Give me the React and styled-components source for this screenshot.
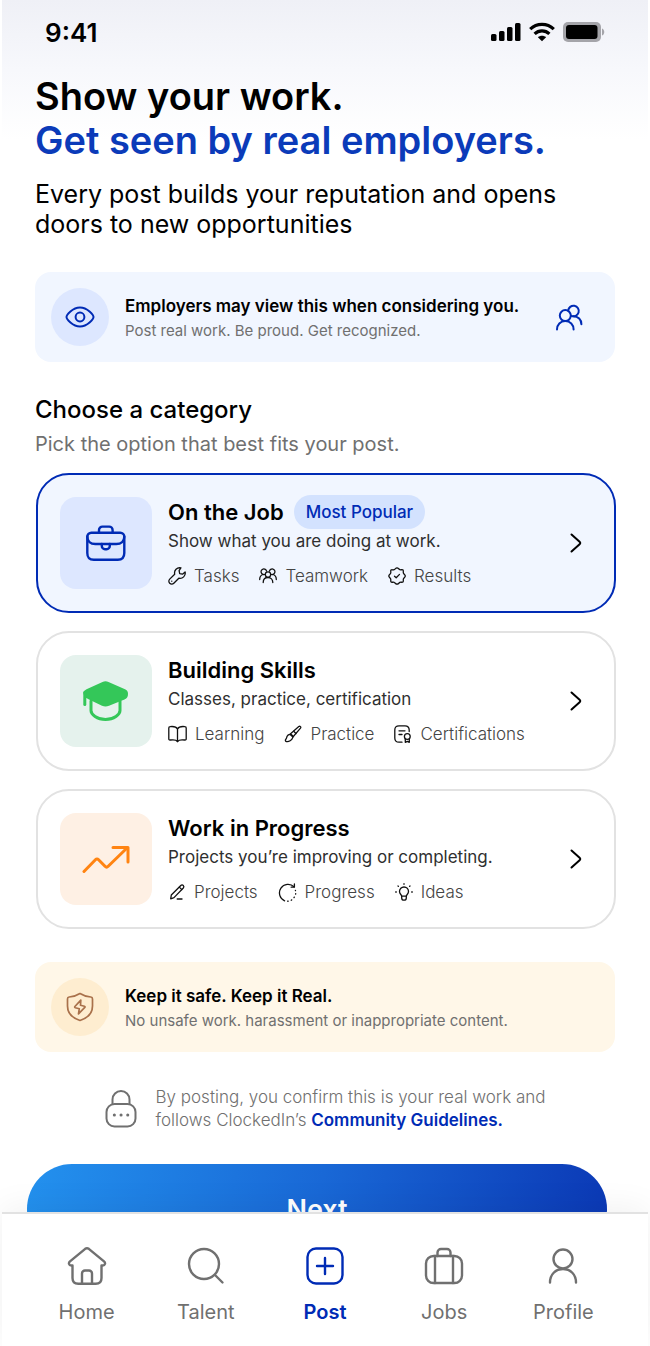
import React from 'react';
import styled, { createGlobalStyle, ThemeProvider } from 'styled-components';

const theme = {
  font: 'Inter, "Liberation Sans", sans-serif',
  colours: {
    blue: '#002bb5',
    headline: '#0b3bb9',
    text: '#000000',
    body: '#2f2f2f',
    tag: '#444444',
    muted: '#707070',
    paleBlue: '#f1f6ff',
    tileBlue: '#dde7ff',
    line: '#e2e2e2',
  },
};

const GlobalStyle = createGlobalStyle`
  * {
    box-sizing: border-box;
  }
  body {
    margin: 0;
    background: #ffffff;
  }
  h1, h2, p {
    margin: 0;
  }
  svg {
    display: block;
    flex: none;
  }
`;

const Shell = styled.div`
  display: flex;
  flex-direction: column;
  height: 100vh;
  padding: 0 2px;
  font-family: ${({ theme }) => theme.font};
  color: ${({ theme }) => theme.colours.text};
`;

const Scroll = styled.div`
  flex: 1;
  min-height: 0;
  overflow-y: auto;
  scrollbar-width: none;
  background: linear-gradient(#eff0f6, #f7f8fc 70px, #ffffff 140px);
`;

const StatusBar = styled.header`
  display: flex;
  align-items: center;
  justify-content: space-between;
  height: 64px;
  padding: 0 43px;
`;

const Time = styled.span`
  font-size: 26px;
  font-weight: 600;
`;

const StatusIcons = styled.div`
  display: flex;
  align-items: center;
  gap: 8px;
`;

const Content = styled.main`
  padding: 10px 33px 32px;
`;

const Headline = styled.h1`
  font-size: 38px;
  line-height: 44px;
  font-weight: 600;
`;

const HeadlineAccent = styled.span`
  display: block;
  color: ${({ theme }) => theme.colours.headline};
`;

const Lead = styled.p`
  margin-top: 17px;
  font-size: 25px;
  line-height: 30px;
`;

const Banner = styled.section`
  display: flex;
  align-items: center;
  gap: 16px;
  margin-top: 33px;
  padding: 16px 32px 16px 16px;
  border-radius: 16px;
  background: ${({ $warm, theme }) => ($warm ? '#fff7e8' : theme.colours.paleBlue)};
`;

const BannerIcon = styled.div`
  display: flex;
  flex: none;
  align-items: center;
  justify-content: center;
  width: 58px;
  height: 58px;
  border-radius: 50%;
  color: ${({ $warm, theme }) => ($warm ? '#a9714b' : theme.colours.blue)};
  background: ${({ $warm, theme }) => ($warm ? '#feedd0' : theme.colours.tileBlue)};
`;

const BannerText = styled.div`
  flex: 1;
  white-space: nowrap;
`;

const BannerTitle = styled.h2`
  font-size: 17px;
  line-height: 28px;
  font-weight: 600;
`;

const BannerNote = styled.p`
  font-size: 15px;
  line-height: 22px;
  color: ${({ theme }) => theme.colours.muted};
`;

const BannerExtra = styled.div`
  color: ${({ theme }) => theme.colours.blue};
`;

const SectionTitle = styled.h2`
  margin-top: 32px;
  font-size: 24px;
  line-height: 32px;
  font-weight: 500;
`;

const SectionNote = styled.p`
  margin-top: 4px;
  font-size: 20px;
  line-height: 28px;
  color: ${({ theme }) => theme.colours.muted};
`;

const Cards = styled.div`
  display: flex;
  flex-direction: column;
  gap: 18px;
  margin: 15px -1px 0 1px;
`;

const Card = styled.button`
  display: flex;
  align-items: center;
  gap: 16px;
  width: 100%;
  padding: 20px 32px 20px 22px;
  border: 2px solid ${({ $selected, theme }) => ($selected ? theme.colours.blue : theme.colours.line)};
  border-radius: 33px;
  background: ${({ $selected, theme }) => ($selected ? theme.colours.paleBlue : '#ffffff')};
  color: inherit;
  font-family: inherit;
  text-align: left;
  cursor: pointer;
`;

const Tile = styled.span`
  display: flex;
  flex: none;
  align-items: center;
  justify-content: center;
  width: 92px;
  height: 92px;
  border-radius: 16px;
  color: ${({ $color }) => $color};
  background: ${({ $bg }) => $bg};
`;

const CardBody = styled.span`
  flex: 1;
  padding-bottom: 3px;
  white-space: nowrap;
`;

const CardTitle = styled.span`
  display: flex;
  align-items: center;
  gap: 10px;
  height: 34px;
  font-size: 22px;
  font-weight: 600;
`;

const Pill = styled.span`
  padding: 0 12px;
  border-radius: 17px;
  font-size: 17px;
  line-height: 34px;
  font-weight: 500;
  color: ${({ theme }) => theme.colours.blue};
  background: #d3e2fe;
`;

const CardText = styled.span`
  display: block;
  font-size: 17px;
  line-height: 24px;
  color: ${({ theme }) => theme.colours.body};
`;

const Tags = styled.span`
  display: flex;
  gap: 20px;
  margin-top: 11px;
`;

const Tag = styled.span`
  display: flex;
  align-items: center;
  gap: 8px;
  font-size: 17px;
  line-height: 24px;
  font-weight: 300;
  color: ${({ theme }) => theme.colours.tag};

  svg {
    color: #111111;
  }
`;

const Confirm = styled.div`
  display: flex;
  align-items: center;
  justify-content: center;
  gap: 19px;
  margin-top: 34px;
  color: ${({ theme }) => theme.colours.muted};
`;

const ConfirmText = styled.p`
  font-size: 17px;
  line-height: 23px;
  font-weight: 300;
`;

const TextLink = styled.a`
  font-weight: 600;
  color: ${({ theme }) => theme.colours.blue};
  text-decoration: none;
`;

const NextButton = styled.button`
  display: block;
  width: 100%;
  height: 90px;
  margin: 32px 0 0 -8px;
  border: 0;
  border-radius: 45px;
  background: linear-gradient(100deg, #2391ee, #1968d6 50%, #0b38b5);
  color: #ffffff;
  font-family: inherit;
  font-size: 27px;
  font-weight: 600;
  cursor: pointer;
`;

const TabBar = styled.nav`
  display: flex;
  flex: none;
  z-index: 1;
  height: 134px;
  padding: 32px 25px 0;
  border-top: 2px solid ${({ theme }) => theme.colours.line};
  background: #ffffff;
  box-shadow: 0 -4px 32px rgba(0, 0, 0, 0.06);
`;

const Tab = styled.a`
  display: flex;
  flex: 1;
  flex-direction: column;
  align-items: center;
  gap: 12px;
  font-size: 20px;
  line-height: 28px;
  font-weight: ${({ $active }) => ($active ? 600 : 400)};
  color: ${({ $active, theme }) => ($active ? theme.colours.blue : theme.colours.muted)};
  text-decoration: none;
`;

// Every icon is drawn on a grid of its own size, so one unit is one pixel
const Icon = ({ w, h, stroke = 2, children }) => (
  <svg
    width={w}
    height={h}
    viewBox={`0 0 ${w} ${h}`}
    fill="none"
    stroke="currentColor"
    strokeWidth={stroke}
    strokeLinecap="round"
    strokeLinejoin="round"
    aria-hidden="true"
  >
    {children}
  </svg>
);

const SignalIcon = () => (
  <svg width="30" height="20" viewBox="0 0 30 20" aria-hidden="true">
    <rect x="0" y="12" width="5.5" height="7" rx="1.5" />
    <rect x="8" y="9" width="5.5" height="10" rx="1.5" />
    <rect x="16" y="5" width="5.5" height="14" rx="1.5" />
    <rect x="24" y="1" width="5.5" height="18" rx="1.5" />
  </svg>
);

const WifiIcon = () => (
  <svg width="26" height="20" viewBox="0 0 26 20" aria-hidden="true">
    <g fill="none" stroke="#000" strokeWidth="3.2">
      <path d="M1.2 7.2C7.8.8 18.2.8 24.8 7.2" />
      <path d="M5.6 11.8C9.8 7.8 16.2 7.8 20.4 11.8" />
    </g>
    <path d="M13 19.2 8.9 15.2C11.2 13.2 14.8 13.2 17.1 15.2Z" />
  </svg>
);

const BatteryIcon = () => (
  <svg width="42" height="20" viewBox="0 0 42 20" aria-hidden="true">
    <rect width="38" height="20" rx="5" fill="#a4a4a9" />
    <rect x="3" y="3" width="31.5" height="14" rx="3" />
    <path d="M39 6.5c3 1 3 6 0 7z" fill="#a4a4a9" />
  </svg>
);

const EyeIcon = () => (
  <Icon w={30} h={22}>
    <path d="M1.5 11C1.5 9 7.5 1.5 15 1.5S28.5 9 28.5 11 22.5 20.5 15 20.5 1.5 13 1.5 11Z" />
    <circle cx="15" cy="11" r="4.4" />
  </Icon>
);

const PeopleIcon = () => (
  <Icon w={27} h={27}>
    <circle cx="9.3" cy="11.6" r="5.5" />
    <path d="M1 25.5c0-5 3.4-8.4 8.3-8.4s8.3 3.4 8.3 8.4" />
    <path d="M12.2 6.7a5.3 5.3 0 1 1 3.2 5.2" />
    <path d="M17.4 12.3c4.8 0 8 3.4 8 7.9" />
  </Icon>
);

const BriefcaseIcon = () => (
  <Icon w={40} h={36} stroke={2.4}>
    <path d="M13 7.8V5a3.4 3.4 0 0 1 3.4-3.4h6.8A3.4 3.4 0 0 1 26.6 5v2.8" />
    <path d="M5.3 7.8h29a4 4 0 0 1 4 4V28c0 4.5-2 6.7-6.5 6.7h-24c-4.5 0-6.5-2.2-6.5-6.7V11.8a4 4 0 0 1 4-4Z" />
    <path d="M1.3 11.5c0 4.7 3.2 7.5 8 7.5h21c4.8 0 8-2.8 8-7.5" />
    <path d="M15.8 19v2a3.2 3.2 0 0 0 3.2 3.2h1.6a3.2 3.2 0 0 0 3.2-3.2v-2" />
  </Icon>
);

const CapIcon = () => (
  <Icon w={46} h={42} stroke={3}>
    <path
      d="M.3 13c0-2 1.8-3 3.2-3.8L19.5 2q3-1.5 6 0L42 9.2q3 1.4 3 4.5c0 3-.8 4.6-3.5 5.8L26 25.7q-3.5 1.4-7 0L6 19.5 1.5 17Z"
      fill="currentColor"
      stroke="none"
    />
    <path d="M1.8 12.5v12" />
    <path d="M8 21v9.5c0 4 6 9 14.500 9s14.500-5 14.500-9V21" />
  </Icon>
);

const TrendIcon = () => (
  <Icon w={48} h={29} stroke={3}>
    <path d="M2 26.500 13.400 14.700q1.600-1.600 3.200 0L23 21.300q1.600 1.600 3.200 0L45 3" />
    <path d="M31 2.500h15V17" />
  </Icon>
);

const ChevronIcon = () => (
  <Icon w={12} h={20}>
    <path d="M1.5 1.5 9.600 8.800q1.300 1.200 0 2.400L1.500 18.500" />
  </Icon>
);

const WrenchIcon = () => (
  <Icon w={18} h={18} stroke={1.3}>
    <path d="M12.9.9A5.2 5.2 0 0 0 6.7 7.2L1.7 12.1a2.8 2.8 0 0 0 4.100 4.100l5-5a5.200 5.200 0 0 0 6.300-6.200l-2.600 2.200-2.800-.6-.6-2.900Z" />
    <path d="M3.700 14.200h.1" />
  </Icon>
);

const TeamIcon = () => (
  <Icon w={18} h={18} stroke={1.3}>
    <path d="M6.200 7.200a2.800 2.800 0 1 1 1.400-3" />
    <path d="M11.800 7.200a2.800 2.800 0 1 0-1.400-3" />
    <circle cx="9" cy="7.6" r="2.7" />
    <path d="M4.200 15.500c0-3 2-5 4.800-5s4.800 2 4.800 5" />
    <path d="M.7 12.500c0-2.600 1.200-4.400 3.300-5" />
    <path d="M17.300 12.500c0-2.600-1.200-4.400-3.300-5" />
  </Icon>
);

const BadgeIcon = () => (
  <Icon w={18} h={18} stroke={1.3}>
    <path d="M9 .8c1.300 0 1.800 1.500 2.900 1.900s2.500-.4 3.100.3.100 2.100.4 3.100 1.900 1.600 1.900 2.900-1.500 1.800-1.900 2.900.4 2.500-.4 3.100-2.100-.1-3.100.4S10.300 17.200 9 17.200s-1.800-1.500-2.900-1.900-2.500.4-3.100-.4.100-2.100-.4-3.100S.8 10.300.8 9s1.500-1.800 1.900-2.900S2.300 3.600 3 3s2.100.1 3.100-.3S7.700.8 9 .8Z" />
    <path d="m6.500 9.200 1.700 1.600 3.300-3.400" />
  </Icon>
);

const BookIcon = () => (
  <Icon w={19} h={18} stroke={1.3}>
    <path d="M9.500 4v12.500C8.200 14.700 5 14.600 2.300 15Q.8 15.200.8 13.800V3Q.8 1.700 2.200 1.600C5 1.300 8.300 1.700 9.500 4Z" />
    <path d="M9.500 4C10.700 1.700 14 1.300 16.800 1.600q1.400.1 1.400 1.400v10.800q0 1.400-1.500 1.200c-2.700-.4-5.900-.3-7.200 1.500" />
  </Icon>
);

const BrushIcon = () => (
  <Icon w={18} h={18} stroke={1.3}>
    <path d="M6 9.200 14.800 1.600c1.200-.9 2.600.4 1.700 1.600L8.900 12Z" />
    <path d="m9.700 6.200 2.300 2.300" />
    <path d="M6.200 9.400c1.800 0 3 1.500 2.500 3.200-.7 2.600-4 4.400-6.300 3.900-1.200-.3-1.300-1.500-.6-2.300.9-1 .8-1.700 1.300-2.900.5-1.200 1.800-1.900 3.100-1.900Z" />
  </Icon>
);

const CertificateIcon = () => (
  <Icon w={18} h={18} stroke={1.3}>
    <path d="M8 17.200H5C2.200 17.200.8 15.800.8 13V5C.8 2.200 2.200.8 5 .8h6c2.800 0 4.200 1.400 4.200 4.200v1.500" />
    <path d="M5 5.800h6M5 9.500h3" />
    <circle cx="13.300" cy="11.500" r="2.900" />
    <path d="M11.300 13.800v3.500l2-1 2 1v-3.500" />
  </Icon>
);

const PencilIcon = () => (
  <Icon w={18} h={18} stroke={1.3}>
    <path d="M2.700 15.800 3.300 12 12.800 2.500c.8-.8 1.800-.7 2.500 0s.7 1.700 0 2.500L6 14.600Z" />
    <path d="m11.300 4.100 2.500 2.500" />
    <path d="M9.200 16H14" />
  </Icon>
);

const ProgressIcon = () => (
  <Icon w={19} h={19} stroke={1.3}>
    <path d="M16 3.700A8.600 8.600 0 1 0 6.600 17.800" />
    <path d="M16.400 1v3.200h-3.200" />
    <path d="M9.600 18.200h.6M13.200 17.200l.5-.3M16 14.600l.3-.5M17.600 11.200l.1-.6M17.500 7.700l-.1-.4" />
  </Icon>
);

const IdeaIcon = () => (
  <Icon w={18} h={18} stroke={1.3}>
    <path d="M6.700 13.200c0-1.500-2.200-2.200-2.200-4.700A4.500 4.500 0 0 1 9 4a4.500 4.500 0 0 1 4.500 4.500c0 2.500-2.200 3.200-2.200 4.700Z" />
    <path d="M6.700 13.200v1.700c0 1.500 1 2.300 2.300 2.300s2.300-.8 2.300-2.300v-1.700" />
    <path d="M9 .7v.6M3 3l.4.4M15 3l-.4.4M.7 9h.6M16.700 9h.6" />
  </Icon>
);

const ShieldIcon = () => (
  <Icon w={28} h={30} stroke={1.7}>
    <path d="M14 1.500c3.500 2.200 7 3.300 10.800 3.500Q26.500 5.200 26.500 7v7c0 7-5 12-12.500 14.500C6.500 26 1.500 21 1.500 14V7Q1.500 5.200 3.200 5C7 4.800 10.500 3.700 14 1.500Z" />
    <path d="M14.800 8.200 8.900 14.500q-.6.8.4 1.200l4 1-.8 5.200 6.300-6.500q.7-.8-.4-1.200l-3.900-1Z" />
  </Icon>
);

const LockIcon = () => (
  <Icon w={32} h={38}>
    <rect x="1.5" y="14" width="29" height="22.5" rx="8" />
    <path d="M7.500 14V9.500a8.500 8.500 0 0 1 17 0V14" />
    <path d="M9.300 25h.1M16 25h.1M22.700 25h.1" strokeWidth="3" />
  </Icon>
);

const HomeIcon = () => (
  <Icon w={40} h={40} stroke={2.4}>
    <path d="M18.200 2.800q1.800-1.300 3.600 0L37 15.400c1.800 1.600 1.200 4-1.300 4.100h-1.200V32c0 4-1.800 5.800-5.800 5.800H11.300c-4 0-5.800-1.800-5.800-5.800V19.500H4.300C1.800 19.400 1.200 17 3 15.400Z" />
    <path d="M15 37.800V27.500a3 3 0 0 1 3-3h4a3 3 0 0 1 3 3v10.300" />
  </Icon>
);

const SearchIcon = () => (
  <Icon w={40} h={40} stroke={2.4}>
    <circle cx="18" cy="18" r="15" />
    <path d="m29 29 7.500 7.500" />
  </Icon>
);

const PlusIcon = () => (
  <Icon w={40} h={40} stroke={2.4}>
    <rect x="2.500" y="2.500" width="35" height="35" rx="8.5" />
    <path d="M20 12v16M12 20h16" />
  </Icon>
);

const JobsIcon = () => (
  <Icon w={40} h={40} stroke={2.4}>
    <path d="M13.500 10V6.500a3.500 3.500 0 0 1 3.500-3.500h6a3.500 3.500 0 0 1 3.500 3.500V10" />
    <rect x="2" y="10" width="36" height="27" rx="7.5" />
    <path d="M11 10v27M29 10v27" />
  </Icon>
);

const ProfileIcon = () => (
  <Icon w={40} h={40} stroke={2.4}>
    <circle cx="20" cy="13" r="9.5" />
    <path d="M7 36.500C7 28.500 12.500 23 20 23s13 5.500 13 13.500" />
  </Icon>
);

const categories = [
  {
    title: 'On the Job',
    pill: 'Most Popular',
    text: 'Show what you are doing at work.',
    icon: <BriefcaseIcon />,
    color: '#002bb5',
    bg: '#dde7ff',
    tags: [
      { label: 'Tasks', icon: <WrenchIcon /> },
      { label: 'Teamwork', icon: <TeamIcon /> },
      { label: 'Results', icon: <BadgeIcon /> },
    ],
  },
  {
    title: 'Building Skills',
    text: 'Classes, practice, certification',
    icon: <CapIcon />,
    color: '#34c759',
    bg: '#e5f2ed',
    tags: [
      { label: 'Learning', icon: <BookIcon /> },
      { label: 'Practice', icon: <BrushIcon /> },
      { label: 'Certifications', icon: <CertificateIcon /> },
    ],
  },
  {
    title: 'Work in Progress',
    text: 'Projects you’re improving or completing.',
    icon: <TrendIcon />,
    color: '#ff8412',
    bg: '#fef0e4',
    tags: [
      { label: 'Projects', icon: <PencilIcon /> },
      { label: 'Progress', icon: <ProgressIcon /> },
      { label: 'Ideas', icon: <IdeaIcon /> },
    ],
  },
];

const tabs = [
  { label: 'Home', icon: <HomeIcon /> },
  { label: 'Talent', icon: <SearchIcon /> },
  { label: 'Post', icon: <PlusIcon /> },
  { label: 'Jobs', icon: <JobsIcon /> },
  { label: 'Profile', icon: <ProfileIcon /> },
];

const CategoryCard = ({ category, selected, onSelect }) => (
  <Card type="button" $selected={selected} aria-pressed={selected} onClick={onSelect}>
    <Tile $color={category.color} $bg={category.bg}>{category.icon}</Tile>
    <CardBody>
      <CardTitle>
        {category.title}
        {category.pill && <Pill>{category.pill}</Pill>}
      </CardTitle>
      <CardText>{category.text}</CardText>
      <Tags>
        {category.tags.map((tag) => (
          <Tag key={tag.label}>
            {tag.icon}
            {tag.label}
          </Tag>
        ))}
      </Tags>
    </CardBody>
    <ChevronIcon />
  </Card>
);

const App = () => {
  const [selected, setSelected] = React.useState('On the Job');

  return (
    <ThemeProvider theme={theme}>
      <GlobalStyle />
      <Shell>
        <Scroll>
          <StatusBar>
            <Time>9:41</Time>
            <StatusIcons>
              <SignalIcon />
              <WifiIcon />
              <BatteryIcon />
            </StatusIcons>
          </StatusBar>
          <Content>
            <Headline>
              Show your work.
              <HeadlineAccent>Get seen by real employers.</HeadlineAccent>
            </Headline>
            <Lead>Every post builds your reputation and opens doors to new opportunities</Lead>

            <Banner>
              <BannerIcon><EyeIcon /></BannerIcon>
              <BannerText>
                <BannerTitle>Employers may view this when considering you.</BannerTitle>
                <BannerNote>Post real work. Be proud. Get recognized.</BannerNote>
              </BannerText>
              <BannerExtra><PeopleIcon /></BannerExtra>
            </Banner>

            <SectionTitle>Choose a category</SectionTitle>
            <SectionNote>Pick the option that best fits your post.</SectionNote>
            <Cards>
              {categories.map((category) => (
                <CategoryCard
                  key={category.title}
                  category={category}
                  selected={selected === category.title}
                  onSelect={() => setSelected(category.title)}
                />
              ))}
            </Cards>

            <Banner $warm>
              <BannerIcon $warm><ShieldIcon /></BannerIcon>
              <BannerText>
                <BannerTitle>Keep it safe. Keep it Real.</BannerTitle>
                <BannerNote>No unsafe work. harassment or inappropriate content.</BannerNote>
              </BannerText>
            </Banner>

            <Confirm>
              <LockIcon />
              <ConfirmText>
                By posting, you confirm this is your real work and
                <br />
                follows ClockedIn’s <TextLink href="#guidelines">Community Guidelines.</TextLink>
              </ConfirmText>
            </Confirm>

            <NextButton type="button">Next</NextButton>
          </Content>
        </Scroll>
        <TabBar>
          {tabs.map((tab) => (
            <Tab
              key={tab.label}
              href={`#${tab.label.toLowerCase()}`}
              $active={tab.label === 'Post'}
              aria-current={tab.label === 'Post' ? 'page' : undefined}
            >
              {tab.icon}
              {tab.label}
            </Tab>
          ))}
        </TabBar>
      </Shell>
    </ThemeProvider>
  );
};

export default App;
